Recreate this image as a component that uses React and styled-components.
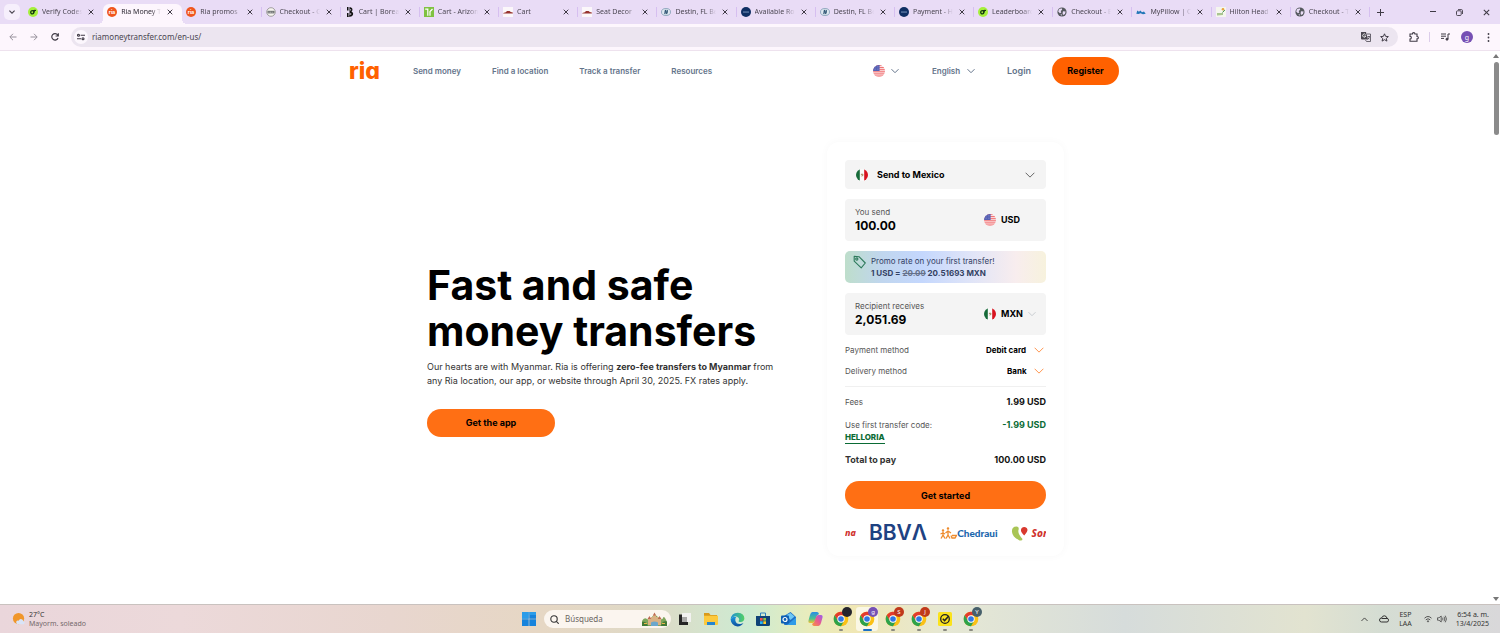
import React from "react";
import styled, { createGlobalStyle, css } from "styled-components";

const ui = `"Noto Sans", "Open Sans", sans-serif`;
const inter = `Inter, "Liberation Sans", sans-serif`;

const GlobalStyle = createGlobalStyle`
  *, *::before, *::after { box-sizing: border-box; }
  body { margin: 0; background: #fff; font-family: ${inter}; color: #000; }
  button, input, select { font: inherit; color: inherit; border: 0; padding: 0; margin: 0; background: none; }
  button { cursor: pointer; }
  svg { display: block; flex: none; }
`;

const Window = styled.div`
  display: flex;
  flex-direction: column;
  min-height: 100vh;
`;

/* ---------- browser tab strip ---------- */

const TabStrip = styled.header`
  display: flex;
  height: 24px;
  background: #e9dcf6;
  font-family: ${ui};
  color: #4b4652;
`;

const TabSearch = styled.button`
  display: grid;
  place-items: center;
  width: 16px;
  height: 16px;
  margin: 4px 4px 0;
  border-radius: 5px;
  background: #f6effc;
`;

const TabList = styled.div`
  display: flex;
  flex: 1;
  min-width: 0;
`;

const TabItem = styled.div`
  display: flex;
  flex: 1 1 0;
  min-width: 0;
  align-items: center;
  gap: 4px;
  margin-top: 4px;
  padding: 0 7px 4px 4px;
  font-size: 7px;
  line-height: 12px;
  position: relative;
  ${(p) =>
    p.$active
      ? css`
          background: #fdf6fd;
          border-radius: 6px 6px 0 0;
          color: #2f2a35;
          &::before,
          &::after {
            content: "";
            position: absolute;
            bottom: 0;
            width: 5px;
            height: 5px;
          }
          &::before {
            left: -5px;
            background: radial-gradient(circle at 0 0, transparent 5px, #fdf6fd 5px);
          }
          &::after {
            right: -5px;
            background: radial-gradient(circle at 100% 0, transparent 5px, #fdf6fd 5px);
          }
        `
      : css`
          &::after {
            content: "";
            position: absolute;
            right: 0;
            top: 3px;
            width: 1px;
            height: 10px;
            background: ${p.$divider ? "#d6bff0" : "transparent"};
          }
        `}
`;

const TabTitle = styled.span`
  flex: 1;
  min-width: 0;
  overflow: hidden;
  white-space: nowrap;
  mask-image: linear-gradient(90deg, #000 75%, transparent 100%);
`;

const IconButton = styled.button`
  display: grid;
  place-items: center;
  flex: none;
  width: ${(p) => p.$w || 12}px;
  height: ${(p) => p.$h || 12}px;
  color: ${(p) => p.$color || "#3f3a45"};
`;

const WindowControls = styled.div`
  display: flex;
  width: 130px;
  padding-left: 4px;
`;

const ControlGroup = styled.div`
  display: flex;
  margin-left: auto;
`;

/* ---------- browser toolbar ---------- */

const Toolbar = styled.div`
  display: flex;
  align-items: center;
  height: 27px;
  padding: 0 3px;
  background: #fdf6fd;
  border-bottom: 1px solid #eee2ee;
  font-family: ${ui};
`;

const Omnibox = styled.label`
  display: flex;
  flex: 1;
  align-items: center;
  gap: 4px;
  height: 20px;
  margin: 0 6px;
  padding: 0 9px 0 3px;
  border-radius: 10px;
  background: #ece5f0;
`;

const SiteInfo = styled.span`
  display: grid;
  place-items: center;
  width: 14px;
  height: 14px;
  border-radius: 50%;
  background: #fcf7fd;
`;

const UrlInput = styled.input`
  flex: 1;
  min-width: 0;
  font-size: 8px;
  line-height: 14px;
  color: #4a4550;
  outline: none;
`;

const ToolbarDivider = styled.span`
  width: 1px;
  height: 10px;
  margin: 0 5px;
  background: #dccdea;
`;

const Avatar = styled.button`
  width: 12px;
  height: 12px;
  margin: 0 6px;
  border-radius: 50%;
  background: #7650b4;
  color: #fff;
  font-size: 7px;
  line-height: 11px;
`;

/* ---------- web page ---------- */

const Viewport = styled.div`
  display: flex;
  flex: 1;
`;

const Page = styled.div`
  flex: 1;
  min-width: 0;
`;

const ScrollTrack = styled.div`
  display: flex;
  flex-direction: column;
  align-items: center;
  width: 8px;
  padding: 2px 0;
`;

const ScrollThumb = styled.div`
  width: 5px;
  height: 73px;
  margin: 3px 0 auto;
  border-radius: 3px;
  background: #8b8b8b;
`;

const SiteHeader = styled.header`
  display: flex;
  align-items: center;
  max-width: 796px;
  height: 39px;
  margin: 0 auto;
  padding: 0 25px 0 1px;
  color: #64748b;
  font-size: 8px;
  font-weight: 600;
`;

const Logo = styled.a`
  color: #ff6100;
  font-size: 23px;
  font-weight: 800;
  line-height: 28px;
  text-decoration: none;
  font-feature-settings: "cv11";
`;

const SiteNav = styled.nav`
  display: flex;
  gap: 31px;
  margin-left: 33px;
`;

const TextLink = styled.a`
  color: inherit;
  text-decoration: none;
  font-size: ${(p) => (p.$large ? 9 : 8)}px;
`;

const Account = styled.div`
  display: flex;
  align-items: center;
  margin-left: auto;
`;

const RegionButton = styled.button`
  display: flex;
  align-items: center;
  gap: 6px;
  margin-right: 33px;
`;

const LoginSlot = styled.span`
  margin: 0 21px 0 32px;
`;

const SelectBox = styled.label`
  display: flex;
  align-items: center;
  gap: ${(p) => p.$gap || 6}px;
  color: ${(p) => p.$chevron || "inherit"};
`;

const Select = styled.select`
  appearance: none;
  flex: ${(p) => (p.$grow ? 1 : "none")};
  min-width: 0;
  color: ${(p) => p.$color || "#000"};
  font-size: ${(p) => p.$size || 9}px;
  font-weight: ${(p) => p.$weight || 700};
  line-height: 14px;
  outline: none;
`;

const PillButton = styled.button`
  width: ${(p) => p.$width};
  height: 28px;
  border-radius: 14px;
  background: ${(p) => p.$bg || "#ff6f14"};
  color: #000;
  font-size: 9px;
  font-weight: 700;
`;

const Hero = styled.main`
  display: flex;
  align-items: center;
  justify-content: space-between;
  max-width: 640px;
  margin: 0 auto;
  padding: 52px 2px 48px 1px;
`;

const Pitch = styled.section`
  width: 356px;
`;

const Title = styled.h1`
  margin: 0 0 6px;
  font-size: 41px;
  font-weight: 700;
  line-height: 46px;
`;

const Lead = styled.p`
  margin: 0 0 21px;
  color: #333;
  font-size: 9px;
  line-height: 14px;
`;

const Card = styled.form`
  display: flex;
  flex-direction: column;
  width: 237px;
  padding: 18px 18px 13px;
  border-radius: 12px;
  background: #fff;
  box-shadow: 0 0 8px rgba(0, 0, 0, 0.03);
`;

const Fields = styled.div`
  display: flex;
  flex-direction: column;
  gap: 10px;
`;

const CountryField = styled.div`
  display: grid;
  align-items: center;
  height: 29px;
  padding: 0 11px;
  border-radius: 4px;
  background: #f4f4f4;
`;

const AmountField = styled.div`
  display: flex;
  align-items: center;
  height: 42px;
  padding: 0 8px 0 10px;
  border-radius: 4px;
  background: #f4f4f4;
`;

const AmountLabel = styled.label`
  display: flex;
  flex: 1;
  flex-direction: column;
  color: #555;
  font-size: 8px;
  line-height: 12px;
`;

const AmountInput = styled.input`
  width: 100px;
  color: #000;
  font-size: 12px;
  font-weight: 700;
  line-height: 16px;
  outline: none;
`;

const Currency = styled.div`
  width: 54px;
`;

const Promo = styled.div`
  display: flex;
  gap: 5px;
  height: 32px;
  padding: 4px 7px 4px 8px;
  border-radius: 5px;
  background: linear-gradient(90deg, #bedecb 0%, #c0d6ee 18%, #c4d7fd 38%, #dfe4f8 62%, #f8edee 85%, #f7f2dd 100%);
  color: #334163;
  font-size: 8px;
  line-height: 12px;
`;

const Strike = styled.s`
  color: #66718a;
`;

const Methods = styled.div`
  margin-top: 5px;
  padding-bottom: 4px;
  border-bottom: 1px solid #f0f0f0;
`;

const Row = styled.div`
  display: flex;
  align-items: ${(p) => p.$align || "flex-start"};
  justify-content: space-between;
  margin-top: ${(p) => p.$top || 0}px;
  padding: ${(p) => p.$pad || "0"};
  color: #555;
  font-size: 8px;
  line-height: 12px;
`;

const Money = styled.span`
  color: ${(p) => (p.$saving ? "#0a6b35" : "#111")};
  font-size: 9px;
  font-weight: 700;
`;

const TotalLabel = styled.span`
  color: #333;
  font-size: 9px;
  font-weight: 700;
`;

const PromoCode = styled.a`
  display: table;
  color: #0a6b35;
  font-weight: 800;
  line-height: 12px;
  text-decoration: none;
  border-bottom: 1px solid #0a6b35;
`;

const Partners = styled.div`
  display: flex;
  align-items: center;
  gap: 13px;
  height: 20px;
  margin-top: 14px;
  overflow: hidden;
  white-space: nowrap;
`;

const PartnerName = styled.span`
  color: ${(p) => p.$color};
  font-family: ${(p) => p.$font || inter};
  font-size: ${(p) => p.$size}px;
  font-weight: ${(p) => p.$weight || 700};
  font-style: ${(p) => (p.$italic ? "italic" : "normal")};
  line-height: 20px;
`;

const PartnerGroup = styled.span`
  display: flex;
  align-items: center;
  gap: ${(p) => p.$gap || 0}px;
`;

/* ---------- taskbar ---------- */

const Taskbar = styled.footer`
  display: grid;
  grid-template-columns: 1fr auto 1fr;
  align-items: center;
  height: 29px;
  border-top: 1px solid #c9c2bf;
  background: linear-gradient(90deg, #ead6db 0%, #ecd9da 12%, #e8d6cf 26%, #e6d7c4 36%, #dfd9c6 43%, #cdebd2 50%, #e9ecbc 54%, #f0e7b4 57%, #e6e8d4 63%, #d6dcdb 75%, #e2e3d0 87%, #d5ddd3 92%, #d9d8da 100%);
  font-family: ${ui};
  font-size: 7px;
  line-height: 9px;
  color: #333;
`;

const Weather = styled.div`
  display: flex;
  align-items: center;
  gap: 3px;
  padding-left: 12px;
`;

const Muted = styled.div`
  color: #75696b;
`;

const Dock = styled.div`
  display: flex;
  align-items: center;
`;

const DockButton = styled.button`
  display: flex;
  flex-direction: column;
  align-items: center;
  justify-content: center;
  position: relative;
  width: 22px;
  height: 24px;
  margin: 0 2px;
  border-radius: 3px;
  background: ${(p) => (p.$active ? "rgba(255,255,255,.65)" : "none")};
  &::after {
    content: "";
    position: absolute;
    bottom: 0;
    width: ${(p) => (p.$active ? 9 : 4)}px;
    height: 2px;
    border-radius: 1px;
    background: ${(p) => (p.$active ? "#1a6fc4" : p.$running ? "#8a8a80" : "transparent")};
  }
`;

const Profile = styled.span`
  position: absolute;
  top: 0;
  right: 0;
  width: 10px;
  height: 10px;
  border-radius: 50%;
  background: ${(p) => p.$color};
  color: #fff;
  font-size: 6px;
  line-height: 10px;
  text-align: center;
`;

const SearchBox = styled.label`
  display: flex;
  align-items: center;
  gap: 6px;
  width: 127px;
  height: 18px;
  margin: 0 1px 0 2px;
  padding: 0 4px 0 6px;
  border-radius: 9px;
  background: #fbf5ef;
`;

const SearchInput = styled.input`
  flex: 1;
  min-width: 0;
  font-size: 8px;
  line-height: 12px;
  outline: none;
  &::placeholder { color: #6b6662; opacity: 1; }
`;

const Tray = styled.div`
  display: flex;
  align-items: center;
  justify-content: flex-end;
  padding-right: 11px;
`;

const TrayText = styled.div`
  margin-left: ${(p) => p.$left}px;
  text-align: ${(p) => p.$align || "center"};
`;

const TrayIcon = styled.span`
  margin-left: ${(p) => p.$left || 0}px;
`;

/* ---------- drawings ---------- */

const Chevron = ({ size = 8, width = 1, ...rest }) => (
  <svg width={size} height={size} viewBox="0 0 8 8" fill="none" stroke="currentColor" strokeWidth={width} {...rest}>
    <path d="M0.5 2.2 4 5.7 7.5 2.2" />
  </svg>
);

const Cross = ({ size = 6, width = 1 }) => (
  <svg width={size} height={size} viewBox="0 0 6 6" stroke="currentColor" strokeWidth={width}>
    <path d="M0.7 0.7 5.3 5.3M5.3 0.7 0.7 5.3" />
  </svg>
);

const UsFlag = () => (
  <svg width="12" height="12" viewBox="0 0 12 12">
    <clipPath id="us"><circle cx="6" cy="6" r="6" /></clipPath>
    <g clipPath="url(#us)">
      <path fill="#fbe3e3" d="M0 0h12v12H0z" />
      <path stroke="#f0686b" strokeWidth="1" d="M0 .5h12M0 2.6h12M0 4.7h12M0 6.8h12M0 8.9h12M0 11h12" />
      <path fill="#5560b4" d="M0 0h6.6v6H0z" />
      <path stroke="#9aa0d8" strokeWidth=".5" strokeDasharray=".6 1" d="M.8 1.5h5.5M.8 3h5.5M.8 4.5h5.5" />
    </g>
  </svg>
);

const MxFlag = () => (
  <svg width="12" height="12" viewBox="0 0 12 12">
    <clipPath id="mx"><circle cx="6" cy="6" r="6" /></clipPath>
    <g clipPath="url(#mx)">
      <path fill="#fafafa" d="M0 0h12v12H0z" />
      <path fill="#176b39" d="M0 0h3.8v12H0z" />
      <path fill="#d8131f" d="M8.2 0H12v12H8.2z" />
      <path fill="none" stroke="#93733c" strokeWidth=".9" d="M4.9 5.6q1.300-1.100 2.200.1-.3 1.500-1.600 1.300" />
    </g>
  </svg>
);

const Globe = () => (
  <svg width="10" height="10" viewBox="0 0 10 10">
    <circle cx="5" cy="5" r="4.600" fill="#55595e" />
    <path fill="#e9dcf6" d="M2 2.200 4.600 1.300 5.200 2.800 3.700 4 4.300 5.400 2.900 6.200 1.200 4.600zM6 4.200l2.600.3-.6 2.500-2 .9-.4-1.700zM3.400 7l1.500.6-.2 1.300z" />
  </svg>
);

const Favicon = ({ kind }) => {
  const box = { width: 10, height: 10, viewBox: "0 0 10 10" };
  switch (kind) {
    case "code":
      return (
        <svg {...box}>
          <circle cx="5" cy="5" r="5" fill="#a6f03c" />
          <circle cx="4.300" cy="5.300" r="1.600" fill="none" stroke="#173a12" strokeWidth="1.300" />
          <path d="M5.200 6.300 7.300 2.800M5 3.500h3" stroke="#173a12" strokeWidth="1.100" />
        </svg>
      );
    case "ria":
      return (
        <svg {...box}>
          <circle cx="5" cy="5" r="5" fill="#f0561d" />
          <text x="5" y="6.700" textAnchor="middle" fontFamily="Inter" fontWeight="700" fontSize="5" fill="#fff">ria</text>
        </svg>
      );
    case "seal":
      return (
        <svg {...box}>
          <circle cx="5" cy="5" r="4.300" fill="#f6f4ee" stroke="#8d8d8a" strokeWidth=".8" />
          <path d="M1.500 3.800h7v2.600h-7z" fill="#6c706f" />
          <path d="M2.500 5.200h5" stroke="#fff" strokeWidth=".6" strokeDasharray="1 .6" />
        </svg>
      );
    case "boreal":
      return (
        <svg {...box}>
          <path fill="#111" d="M2 0h1.500v3.500H2zM2 6h1.500v4H2zM4.500 0Q8.200.5 7.300 3.600 6.800 4.500 6.500 4.800 9 5.800 7.800 8.300 6.500 10 3.500 9.800L4.500 8z" />
          <path stroke="#e9dcf6" strokeWidth=".7" d="M5.600 2v1.600M5.700 6v2" />
        </svg>
      );
    case "arizona":
      return (
        <svg {...box}>
          <path fill="#7fc241" d="M0 0h10v10H0z" />
          <path fill="none" stroke="#fff" strokeWidth="1.200" d="M1.200 2.200h2.600v6.500M6 8.700V4.500L8.500 2" />
        </svg>
      );
    case "car":
      return (
        <svg {...box}>
          <path fill="#fbf7fa" d="M0 0h10v10H0z" />
          <path fill="#97332f" d="M.3 6 2.800 5.200 4 4.100h2.600l1.200 1 2 .5V6.500H.3z" />
        </svg>
      );
    case "destin":
      return (
        <svg {...box}>
          <ellipse cx="5" cy="5" rx="4.500" ry="3.500" fill="#dfe9f0" stroke="#7d9cb2" strokeWidth=".8" />
          <path d="M3.800 7.200 4.500 2.800M5.600 7.200l.7-4.400M3.500 5h3.500" stroke="#2c5472" strokeWidth="1.200" />
        </svg>
      );
    case "hilton":
      return (
        <svg {...box}>
          <circle cx="5" cy="5" r="5" fill="#0f2f63" />
          <path d="M2 4.500h6v1.100H2z" fill="#6d8bb5" />
        </svg>
      );
    case "pillow":
      return (
        <svg {...box}>
          <path fill="#2377b8" d="M.3 6.800 1.300 3.600 3 4.800 4.300 3.600 6 5.200 8 4.600 9.700 6.800 7 7.200 4.500 6.300 2.500 7z" />
        </svg>
      );
    case "head":
      return (
        <svg {...box}>
          <path fill="#f5f6ee" d="M0 0h10v10H0z" />
          <path fill="#a9c590" d="M1 6h6v2l-6 .5z" />
          <circle cx="7" cy="2.200" r="1.300" fill="#e8a33d" />
          <path stroke="#3e8c4a" d="M6.500 5.500 8.800 3" />
        </svg>
      );
    default:
      return <Globe />;
  }
};

const ChromeLogo = () => (
  <svg width="16" height="16" viewBox="0 0 24 24">
    <circle cx="12" cy="12" r="11" fill="#fbc116" />
    <path fill="#e33b2e" d="M2.500 6.500A11 11 0 0 1 21.500 6.500H12L7.200 14.700z" />
    <path fill="#2da24c" d="M2.500 6.500 7.300 14.700 12 17.500 16.700 14.700 12 23A11 11 0 0 1 2.500 6.500z" />
    <circle cx="12" cy="12" r="5.500" fill="#fff" />
    <circle cx="12" cy="12" r="4.200" fill="#2f77e4" />
  </svg>
);

const WindowsLogo = () => (
  <svg width="14" height="14" viewBox="0 0 14 14">
    <path fill="#1683dc" d="M0 0h6.700v6.700H0zM7.300 0H14v6.700H7.300zM0 7.300h6.700V14H0zM7.300 7.300H14V14H7.300z" />
    <path fill="#35a7ee" d="M0 0h6.700v6.700H0zM7.300 0H14v3H7.300z" opacity=".7" />
  </svg>
);

const Castle = () => (
  <svg width="25" height="14" viewBox="0 0 25 14">
    <path fill="#7fa65c" d="M0 9q2-4 5-2t5-2 6 0 5 1 4 4v4H0z" />
    <path fill="#d9b184" d="M6 7h3V5h2V3h3v2h2v2h3v6H6z" />
    <path fill="#bd6a52" d="M5.500 7 7.500 4 9.300 7zM10.800 3.600l1.700-3 1.700 3zM15.800 7l1.700-3L19.500 7z" />
    <path fill="#6aa7cc" d="M9 10.500q3.500-2 7 0V14H9z" />
    <path fill="#447a36" d="M0 10q4-1.500 6 4H0zM25 9.500q-5-1-6 4.500h6z" />
    <path stroke="#e9b64c" d="M2 11.500h3M20 11.500h3" />
  </svg>
);

const TaskView = () => (
  <svg width="14" height="14" viewBox="0 0 14 14">
    <path fill="#252525" d="M1 2.500h8v10H1z" />
    <path fill="#f2f2f0" d="M4 1h9v9H4z" />
    <path fill="#a9a9a7" d="M4 5h5v5H4z" />
    <path fill="#252525" d="M1 10h9v3H1z" />
  </svg>
);

const Folder = () => (
  <svg width="16" height="14" viewBox="0 0 16 14">
    <path fill="#d99a1b" d="M1 1h5l1.500 2H14v4H1z" />
    <path fill="#fcc93d" d="M1 3.800h14V12q0 1-1 1H2q-1 0-1-1z" />
    <path fill="#2585d0" d="M4 10h8v3H4z" />
  </svg>
);

const Edge = () => (
  <svg width="15" height="15" viewBox="0 0 24 24">
    <defs>
      <linearGradient id="edgeTop" x1="0" x2="1"><stop offset="0" stopColor="#1c8fd8" /><stop offset="1" stopColor="#52d163" /></linearGradient>
      <linearGradient id="edgeLow" x1="0" y1="0" x2="0" y2="1"><stop offset="0" stopColor="#1b97df" /><stop offset="1" stopColor="#0d4f9e" /></linearGradient>
    </defs>
    <path fill="url(#edgeLow)" d="M1 12Q3 6 10 8 8 10 8.500 13.500 10 20 17 19q3-.5 4.500-1.500Q18 23 12 23 2 22 1 12z" />
    <path fill="url(#edgeTop)" d="M1 12Q2 1 12.500 1 23 2 23 10.500 22.500 16 17 16q-4 0-3-2 1.500-2 0-4.500Q11 6.500 7 7 3 8 1 12z" />
  </svg>
);

const Store = () => (
  <svg width="14" height="15" viewBox="0 0 14 15">
    <path fill="none" stroke="#2b7fc0" d="M4.500 4V1h5v3" />
    <path fill="#0e4377" d="M0 4h14v8.500Q14 14 12.500 14h-11Q0 14 0 12.500z" />
    <path fill="#ef5350" d="M4 6h2.700v2.700H4z" />
    <path fill="#8bc34a" d="M7.300 6H10v2.700H7.300z" />
    <path fill="#29b6f6" d="M4 9.300h2.700V12H4z" />
    <path fill="#ffca28" d="M7.300 9.300H10V12H7.300z" />
  </svg>
);

const Outlook = () => (
  <svg width="16" height="14" viewBox="0 0 16 14">
    <path fill="#1f6fc6" d="M3 4 9.500 0 15 5v7q0 1-1 1H4q-1 0-1-1z" />
    <path fill="#6fc8f4" d="M5.500 3 9.500 1 13.500 4.500 9.500 8z" />
    <path fill="#2f9be8" d="M15 5.500V12q0 1-1 1H6z" />
    <rect y="3.500" width="8" height="8" rx="1" fill="#0f5fb4" />
    <circle cx="4" cy="7.500" r="2" fill="none" stroke="#fff" strokeWidth="1.200" />
  </svg>
);

const Copilot = () => (
  <svg width="15" height="14" viewBox="0 0 15 14">
    <defs>
      <linearGradient id="copA" x1="0" y1="0" x2="0" y2="1"><stop offset="0" stopColor="#2a8be8" /><stop offset=".6" stopColor="#4cc28e" /><stop offset="1" stopColor="#f2c12e" /></linearGradient>
      <linearGradient id="copB" x1="1" y1="0" x2="0" y2="1"><stop offset="0" stopColor="#9a5cf0" /><stop offset=".5" stopColor="#ea5c8e" /><stop offset="1" stopColor="#f7983a" /></linearGradient>
    </defs>
    <path fill="url(#copA)" d="M4.500 0H9q1.500 0 2 2L9 3.500 7 9q-.7 2-2.500 2H2Q0 11 .5 8.500L2 3Q2.800 0 4.500 0z" />
    <path fill="url(#copB)" d="M10.500 14H6q-1.500 0-2-2l2-1.500L8 5q.7-2 2.500-2H13q2 0 1.500 2.500L13 11q-.8 3-2.500 3z" />
  </svg>
);

const Norton = () => (
  <svg width="14" height="14" viewBox="0 0 14 14">
    <rect width="14" height="14" rx="1.500" fill="#fbe31b" />
    <circle cx="7" cy="7" r="4.300" fill="none" stroke="#222" strokeWidth="1.300" />
    <path fill="none" stroke="#222" strokeWidth="1.500" d="M4.800 6.800 6.600 8.600 10.800 4" />
  </svg>
);

/* ---------- data ---------- */

const tabs = [
  ["code", "Verify Codes"],
  ["ria", "Ria Money Transfer"],
  ["ria", "Ria promos"],
  ["seal", "Checkout - G"],
  ["boreal", "Cart | Borealis"],
  ["arizona", "Cart - Arizona"],
  ["car", "Cart"],
  ["car", "Seat Decor"],
  ["destin", "Destin, FL Bea"],
  ["hilton", "Available Roo"],
  ["destin", "Destin, FL Bea"],
  ["hilton", "Payment - Hil"],
  ["code", "Leaderboard"],
  ["globe", "Checkout - B"],
  ["pillow", "MyPillow | Ch"],
  ["head", "Hilton Head"],
  ["globe", "Checkout - T"],
];

const navLinks = ["Send money", "Find a location", "Track a transfer", "Resources"];

const methods = [
  ["Payment method", "Debit card"],
  ["Delivery method", "Bank"],
];

const dockApps = [
  { name: "Task view", icon: TaskView },
  { name: "Files", icon: Folder },
  { name: "Edge", icon: Edge },
  { name: "Store", icon: Store },
  { name: "Outlook", icon: Outlook },
  { name: "Copilot", icon: Copilot },
  { name: "Chrome", icon: ChromeLogo, running: true, color: "#25252d", badge: "" },
  { name: "Chrome g", icon: ChromeLogo, running: true, active: true, color: "#7650b4", badge: "g" },
  { name: "Chrome S", icon: ChromeLogo, running: true, color: "#c0391b", badge: "S" },
  { name: "Chrome J", icon: ChromeLogo, running: true, color: "#c0391b", badge: "J" },
  { name: "Norton", icon: Norton, running: true },
  { name: "Chrome Y", icon: ChromeLogo, running: true, color: "#47606b", badge: "Y" },
];

/* ---------- sections ---------- */

function BrowserTabs() {
  return (
    <TabStrip>
      <TabSearch aria-label="Search tabs"><Chevron size={6} width={1.6} /></TabSearch>
      <TabList>
        {tabs.map(([icon, title], i) => (
          <TabItem key={i} $active={i === 1} $divider={i > 1}>
            <Favicon kind={icon} />
            <TabTitle>{title}</TabTitle>
            <IconButton $w={10} aria-label={`Close ${title}`}><Cross /></IconButton>
          </TabItem>
        ))}
      </TabList>
      <WindowControls>
        <IconButton $h={24} aria-label="New tab">
          <svg width="7" height="7" viewBox="0 0 7 7" stroke="currentColor"><path d="M3.500 0v7M0 3.500h7" /></svg>
        </IconButton>
        <ControlGroup>
          <IconButton $w={27} $h={24} aria-label="Minimize">
            <svg width="6" height="6" viewBox="0 0 6 6" stroke="currentColor"><path d="M0 2.500h6" /></svg>
          </IconButton>
          <IconButton $w={27} $h={24} aria-label="Restore">
            <svg width="7" height="7" viewBox="0 0 7 7" fill="none" stroke="currentColor" strokeWidth=".9">
              <rect x=".5" y="1.800" width="4.700" height="4.700" rx="1" />
              <path d="M2 .6h3.400q1.100 0 1.100 1.100V5" />
            </svg>
          </IconButton>
          <IconButton $w={27} $h={24} aria-label="Close window"><Cross size={7} width={0.9} /></IconButton>
        </ControlGroup>
      </WindowControls>
    </TabStrip>
  );
}

function BrowserToolbar() {
  return (
    <Toolbar>
      <IconButton $w={20} $h={20} $color="#96909b" aria-label="Back">
        <svg width="8" height="8" viewBox="0 0 8 8" fill="none" stroke="currentColor"><path d="M7.500 4H1M4 .8.800 4 4 7.200" /></svg>
      </IconButton>
      <IconButton $w={21} $h={20} $color="#96909b" aria-label="Forward">
        <svg width="8" height="8" viewBox="0 0 8 8" fill="none" stroke="currentColor"><path d="M.5 4H7M4 .8 7.200 4 4 7.200" /></svg>
      </IconButton>
      <IconButton $w={21} $h={20} aria-label="Reload">
        <svg width="8" height="8" viewBox="0 0 8 8" fill="none" stroke="currentColor" strokeWidth="1.200"><path d="M7 5A3.200 3.200 0 1 1 6.600 2L7.300 3M7.300.3V3H4.600" /></svg>
      </IconButton>
      <Omnibox>
        <SiteInfo>
          <svg width="8" height="8" viewBox="0 0 8 8" fill="none" stroke="#3f3a45" strokeWidth="1.100">
            <path d="M3.600 2.200H8M0 5.800h4" /><circle cx="1.500" cy="2.200" r="1" /><circle cx="6" cy="5.800" r="1" />
          </svg>
        </SiteInfo>
        <UrlInput aria-label="Address" defaultValue="riamoneytransfer.com/en-us/" />
        <IconButton $w={19} aria-label="Translate">
          <svg width="10" height="10" viewBox="0 0 10 10">
            <path fill="#4a4650" d="M0 0h5l2 7.500H1Q0 7.500 0 6.500z" />
            <path fill="none" stroke="#4a4650" strokeWidth=".8" d="M6 2h3.500v7.500H5.500L4.500 8M6.500 4.500H9M7.800 4v1M8.500 5 6.800 7.500M7 5.800l1.500 1.500" />
            <path fill="none" stroke="#fff" strokeWidth=".8" d="M4.600 2.700A1.600 1.600 0 1 0 4.800 4H3.300" />
          </svg>
        </IconButton>
        <IconButton $w={10} aria-label="Bookmark">
          <svg width="9" height="9" viewBox="0 0 10 10" fill="none" stroke="currentColor" strokeWidth="1.100"><path d="M5 .9 6.200 3.700 9.300 4 7 6l.7 3L5 7.400 2.300 9 3 6 .7 4l3.100-.3z" /></svg>
        </IconButton>
      </Omnibox>
      <IconButton $w={20} $h={20} aria-label="Extensions">
        <svg width="10" height="10" viewBox="0 0 10 10" fill="none" stroke="currentColor" strokeWidth="1.100">
          <path d="M1 2h2.500q0-1.400 1.200-1.400T5.900 2H8v2.500q1.400 0 1.400 1.200T8 6.900v2.300H1V7q1.300 0 1.300-1.300T1 4.400z" />
        </svg>
      </IconButton>
      <ToolbarDivider />
      <IconButton $w={20} $h={20} aria-label="Media">
        <svg width="9" height="8" viewBox="0 0 9 8" fill="none" stroke="currentColor" strokeWidth="1">
          <path d="M0 1h5M0 3.200h5M0 5.400h3M7 6V1h2" /><circle cx="6" cy="6.200" r="1" fill="currentColor" />
        </svg>
      </IconButton>
      <Avatar aria-label="Profile">g</Avatar>
      <IconButton $w={18} $h={20} aria-label="Menu">
        <svg width="3" height="9" viewBox="0 0 3 9" fill="currentColor"><circle cx="1.500" cy="1" r=".9" /><circle cx="1.500" cy="4.500" r=".9" /><circle cx="1.500" cy="8" r=".9" /></svg>
      </IconButton>
    </Toolbar>
  );
}

function Header() {
  return (
    <SiteHeader>
      <Logo href="#home">ria</Logo>
      <SiteNav>
        {navLinks.map((t) => <TextLink key={t} href="#nav">{t}</TextLink>)}
      </SiteNav>
      <Account>
        <RegionButton aria-label="Country: United States"><UsFlag /><Chevron /></RegionButton>
        <SelectBox>
          <Select $size={8} $weight={600} $color="#64748b" aria-label="Language"><option>English</option></Select>
          <Chevron />
        </SelectBox>
        <LoginSlot><TextLink $large href="#login">Login</TextLink></LoginSlot>
        <PillButton $width="67px" $bg="#ff6100">Register</PillButton>
      </Account>
    </SiteHeader>
  );
}

function Calculator() {
  return (
    <Card onSubmit={(e) => e.preventDefault()}>
      <Fields>
        <CountryField>
          <SelectBox $gap={9} $chevron="#666">
            <MxFlag />
            <Select $grow aria-label="Destination"><option>Send to Mexico</option></Select>
            <Chevron size={10} width={0.8} />
          </SelectBox>
        </CountryField>
        <AmountField>
          <AmountLabel>You send<AmountInput defaultValue="100.00" /></AmountLabel>
          <Currency>
            <SelectBox $gap={5}><UsFlag /><Select aria-label="Send currency"><option>USD</option></Select></SelectBox>
          </Currency>
        </AmountField>
        <Promo>
          <svg width="13" height="14" viewBox="0 0 13 13" fill="none" stroke="#2d7a5b" strokeWidth="1.100" strokeLinejoin="round">
            <path d="M1.200.7 6 1.200 12.300 7.500 8.200 12.300 1.200 5.700z" /><circle cx="3.800" cy="3.500" r="1.100" />
          </svg>
          <div>
            <div>Promo rate on your first transfer!</div>
            <b>1 USD = <Strike>20.09</Strike> 20.51693 MXN</b>
          </div>
        </Promo>
        <AmountField>
          <AmountLabel>Recipient receives<AmountInput defaultValue="2,051.69" /></AmountLabel>
          <Currency>
            <SelectBox $gap={5} $chevron="#c8ccd0"><MxFlag /><Select aria-label="Receive currency"><option>MXN</option></Select><Chevron /></SelectBox>
          </Currency>
        </AmountField>
      </Fields>
      <Methods>
        {methods.map(([label, value]) => (
          <Row as="label" key={label} $align="center" $pad="3px 2px 4px 0">
            {label}
            <SelectBox as="span" $gap={7} $chevron="#ff9650">
              <Select $size={8}><option>{value}</option></Select>
              <Chevron size={10} width={0.8} />
            </SelectBox>
          </Row>
        ))}
      </Methods>
      <Row $top={9}><span>Fees</span><Money>1.99 USD</Money></Row>
      <Row $top={11}>
        <span>Use first transfer code:<PromoCode href="#code">HELLORIA</PromoCode></span>
        <Money $saving>-1.99 USD</Money>
      </Row>
      <Row $top={10} $pad="0 0 15px"><TotalLabel>Total to pay</TotalLabel><Money>100.00 USD</Money></Row>
      <PillButton $width="100%">Get started</PillButton>
      <Partners>
        <PartnerName $size={9} $color="#d0342f" $weight={800} $font={ui} $italic>na</PartnerName>
        <PartnerName $size={21} $color="#1e4282" $weight={600}>BBVΛ</PartnerName>
        <PartnerGroup>
          <svg width="17" height="12" viewBox="0 0 17 12" fill="none" stroke="#ee8a2c" strokeWidth="1.300">
            <path d="M3 5v3L1 11.500M3 8l2 3.500M.5 7l2.500-1 2 1M8 3.500V8l-2 3.500M8 8l2 3.500M5.500 6 8 4l3 2M11 8.500l1 2.500h3l1.500-2.500H12" />
            <circle cx="3" cy="3.500" r=".6" /><circle cx="8" cy="1.500" r=".6" />
          </svg>
          <PartnerName $size={10} $color="#1c68ae" $weight={900} $font={`Lato, ${inter}`}>Chedraui</PartnerName>
        </PartnerGroup>
        <PartnerGroup $gap={4}>
          <svg width="17" height="15" viewBox="0 0 16 15">
            <path fill="#a9c555" d="M5 .5Q8 .5 7 4T11 13q0 2-3 1.500Q1 11 .5 6 0 .5 5 .5z" />
            <path fill="#d8392f" d="M12.700 9.500Q9 6 9.500 3.800 10 1 12.700 1T16 3.800Q16 6 12.700 9.500z" />
          </svg>
          <PartnerName $size={10} $color="#d0342f" $weight={800} $font={ui} $italic>Soriana</PartnerName>
        </PartnerGroup>
      </Partners>
    </Card>
  );
}

function SystemTaskbar() {
  return (
    <Taskbar>
      <Weather>
        <svg width="14" height="14" viewBox="0 0 15 14">
          <circle cx="7" cy="6.500" r="6" fill="#f0962a" />
          <path fill="#d9e4f7" d="M6 12.500q-2-.5-1.500-2.500.8-1.800 2.500-1.200Q8.500 6 11 7.500q1 .8 1 2 2 .3 1.500 2-.4 1-1.500 1z" />
        </svg>
        <div>27°C<Muted>Mayorm. soleado</Muted></div>
      </Weather>
      <Dock>
        <DockButton aria-label="Start"><WindowsLogo /></DockButton>
        <SearchBox>
          <svg width="9" height="9" viewBox="0 0 9 9" fill="none" stroke="#333" strokeWidth="1.100"><circle cx="4" cy="4" r="3.200" /><path d="M6.300 6.300 8.700 8.700" /></svg>
          <SearchInput placeholder="Búsqueda" aria-label="Búsqueda" />
          <Castle />
        </SearchBox>
        {dockApps.map(({ name, icon: Icon, running, active, color, badge }) => (
          <DockButton key={name} aria-label={name} $running={running} $active={active}>
            <Icon />
            {color && <Profile $color={color}>{badge}</Profile>}
          </DockButton>
        ))}
      </Dock>
      <Tray>
        <svg width="7" height="7" viewBox="0 0 8 8" fill="none" stroke="#333"><path d="M.5 5.700 4 2.200 7.500 5.700" /></svg>
        <TrayIcon $left={11}>
          <svg width="10" height="8" viewBox="0 0 10 8" fill="none" stroke="#333"><path d="M2.500 7Q.5 7 .5 5t2-2Q3.500.6 5.500.800T8 3.200q1.500.3 1.500 2T8 7zM2.500 3.500h6" /></svg>
        </TrayIcon>
        <TrayText $left={10}>ESP<br />LAA</TrayText>
        <TrayIcon $left={12}>
          <svg width="8" height="8" viewBox="0 0 8 8" fill="none" stroke="#444" strokeWidth=".9"><path d="M.5 3.200Q4-.2 7.500 3.200M1.800 4.800Q4 2.700 6.200 4.800" /><circle cx="4" cy="6.300" r=".6" /></svg>
        </TrayIcon>
        <TrayIcon $left={5}>
          <svg width="10" height="8" viewBox="0 0 10 8" fill="none" stroke="#444" strokeWidth=".8"><path d="M.5 2.800H2L4.200 1v6L2 5.200H.5zM5.500 2.700q1 1.300 0 2.600M7 1.700q1.700 2.300 0 4.600M8.300.7q2.300 3.300 0 6.600" /></svg>
        </TrayIcon>
        <TrayText $left={9} $align="right">6:54 a. m.<br />13/4/2025</TrayText>
      </Tray>
    </Taskbar>
  );
}

export default function App() {
  return (
    <Window>
      <GlobalStyle />
      <BrowserTabs />
      <BrowserToolbar />
      <Viewport>
        <Page>
          <Header />
          <Hero>
            <Pitch>
              <Title>Fast and safe money transfers</Title>
              <Lead>
                Our hearts are with Myanmar. Ria is offering <b>zero-fee transfers to Myanmar</b> from any Ria
                location, our app, or website through April 30, 2025. FX rates apply.
              </Lead>
              <PillButton $width="128px">Get the app</PillButton>
            </Pitch>
            <Calculator />
          </Hero>
        </Page>
        <ScrollTrack aria-hidden="true">
          <svg width="6" height="6" viewBox="0 0 6 6" fill="#777"><path d="M3 1 6 5H0z" /></svg>
          <ScrollThumb />
          <svg width="6" height="6" viewBox="0 0 6 6" fill="#777"><path d="M3 5 6 1H0z" /></svg>
        </ScrollTrack>
      </Viewport>
      <SystemTaskbar />
    </Window>
  );
}
